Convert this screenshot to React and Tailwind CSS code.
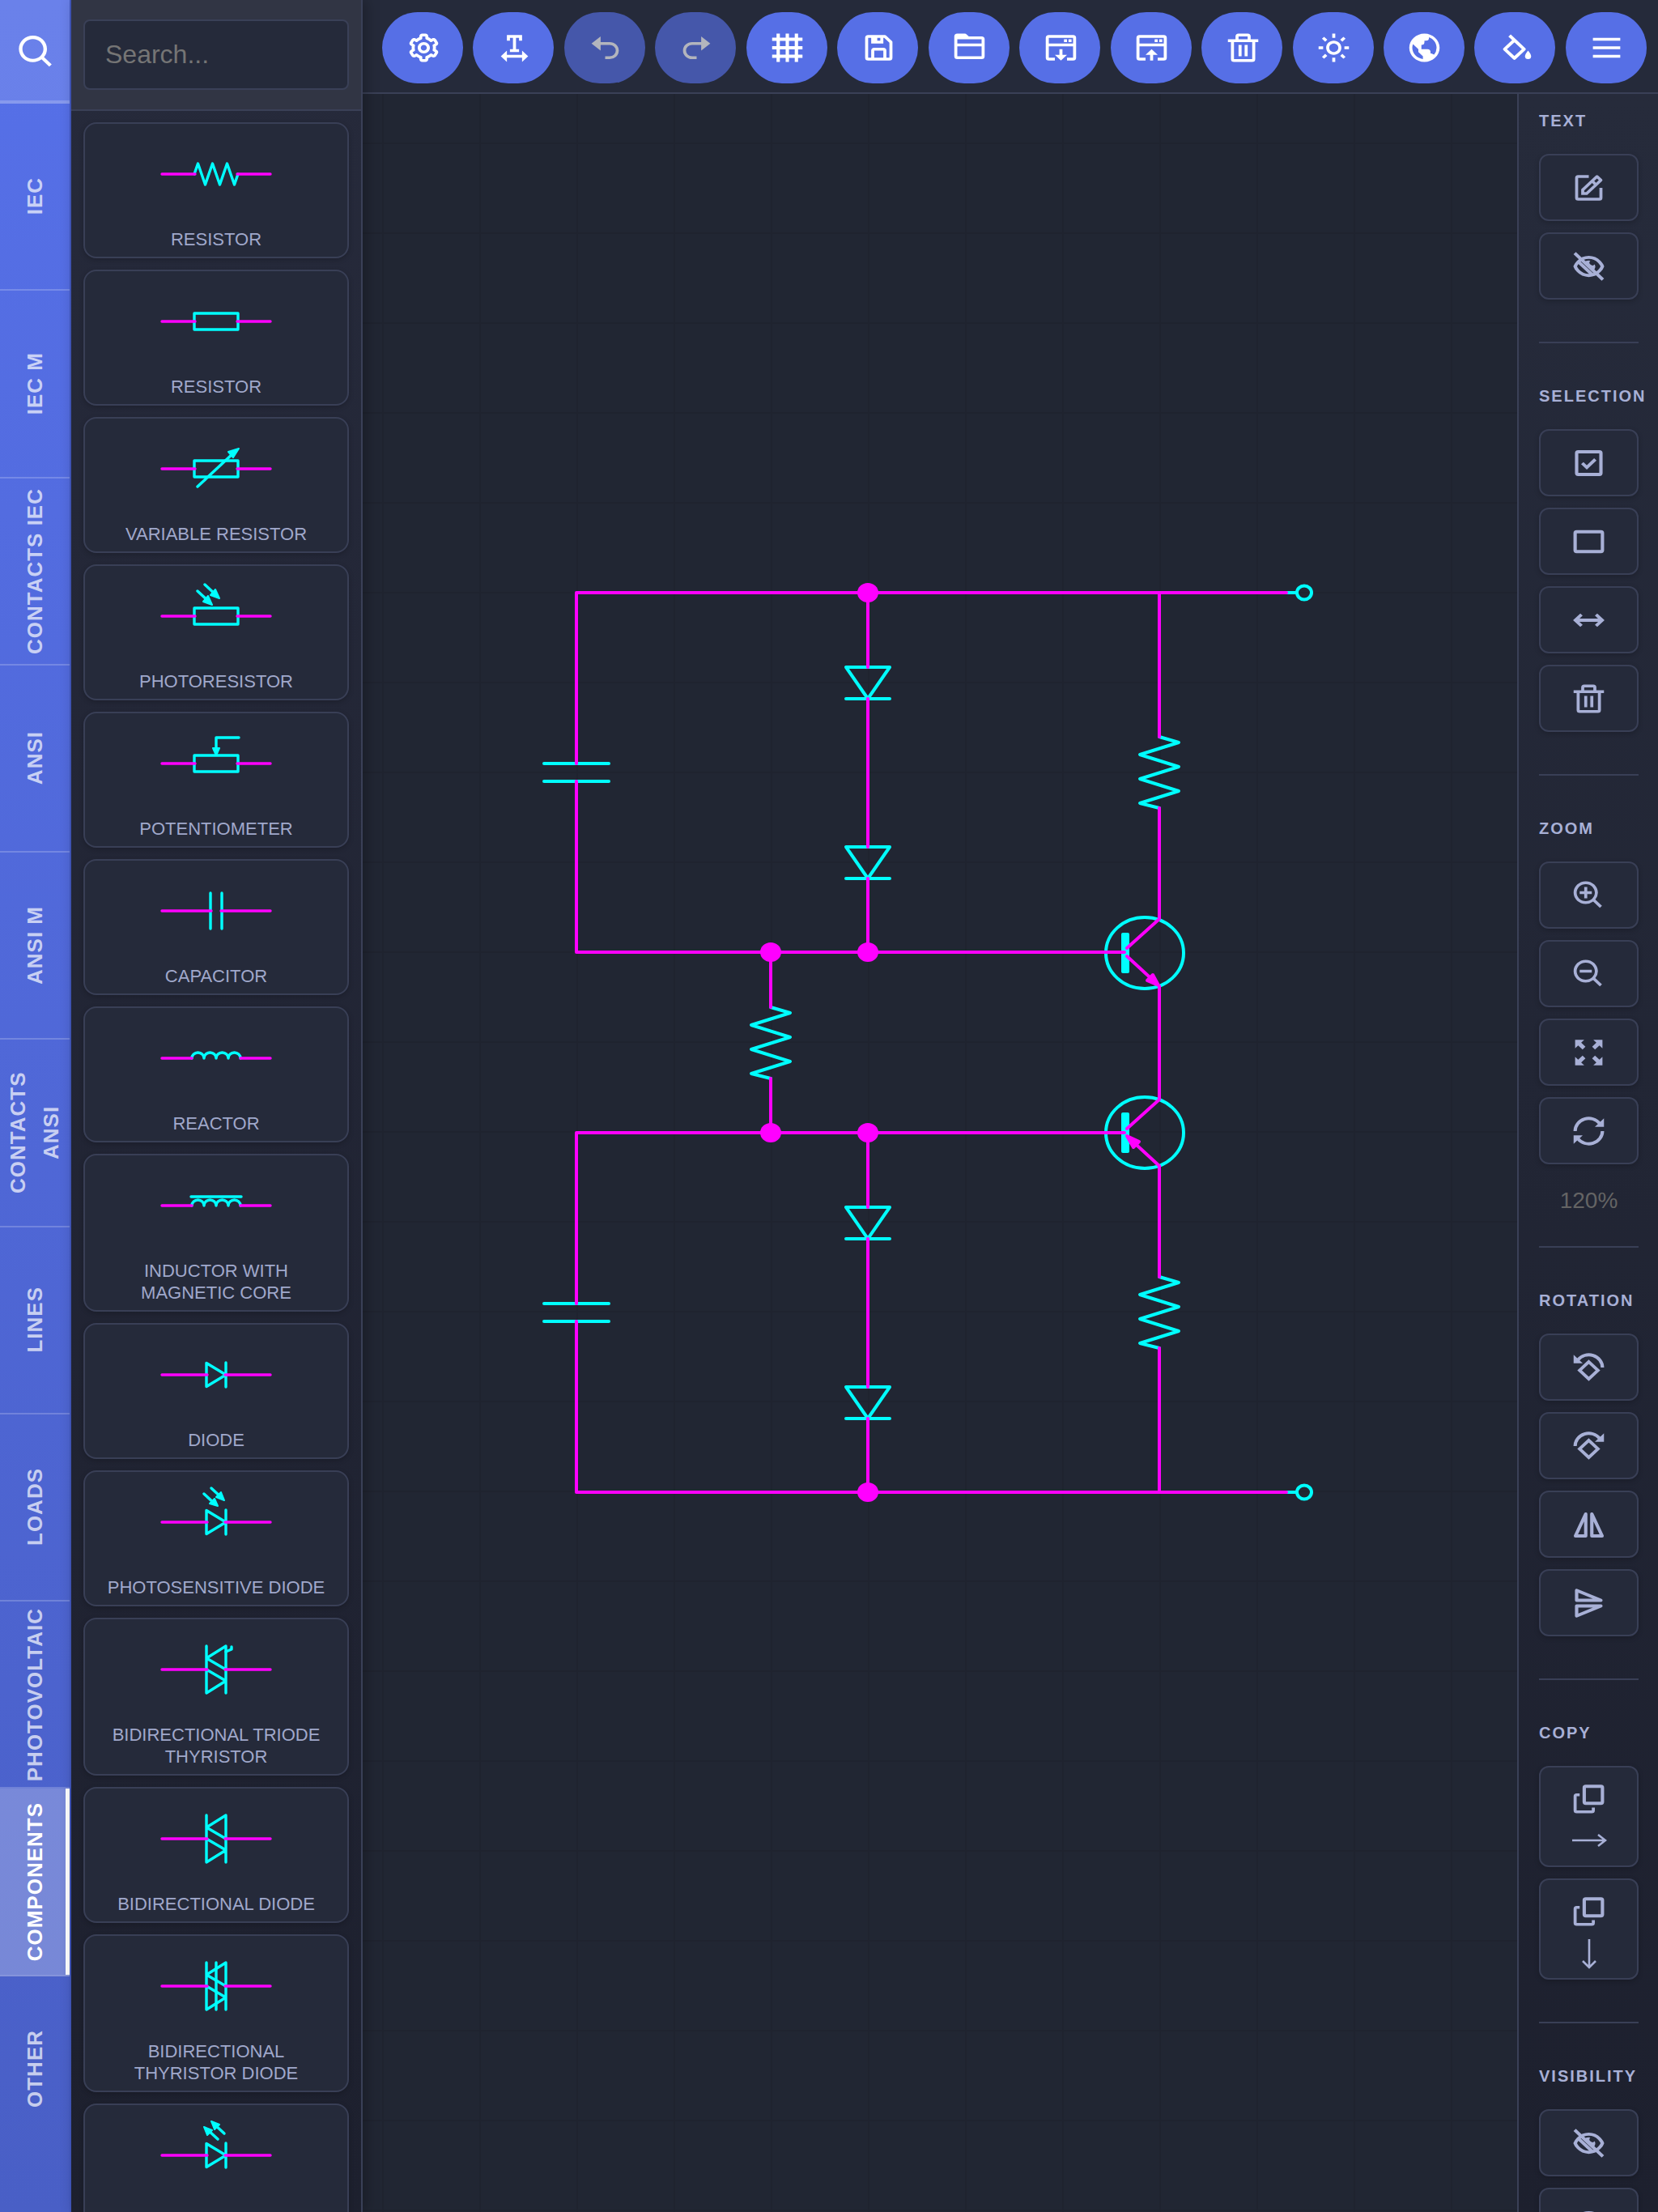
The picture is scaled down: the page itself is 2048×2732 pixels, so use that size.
import React, { useState } from 'react';
import { BiCog, BiSave, BiSearch, BiSun, BiWorld, BiZoomIn, BiZoomOut } from 'react-icons/bi';

// --- Icons (24x24 grid) ---
const Icon = ({ children }) => (
  <svg viewBox="0 0 24 24" preserveAspectRatio="none" fill="currentColor" className="w-[45px] h-[42px]">
    {children}
  </svg>
);

const Stroke = ({ d, ...rest }) => (
  <path d={d} fill="none" stroke="currentColor" strokeWidth="2.2" {...rest} />
);

const lib = (Glyph) => <Glyph preserveAspectRatio="none" className="w-[45px] h-[42px]" />;

const icons = {
  cog: lib(BiCog),
  save: lib(BiSave),
  sun: lib(BiSun),
  world: lib(BiWorld),
  zoomIn: lib(BiZoomIn),
  zoomOut: lib(BiZoomOut),
  hide: (
    <Icon>
      <Stroke d="M3 12s2.3-6.4 9-6.4 9 6.4 9 6.4-2.3 6.4-9 6.4S3 12 3 12z" strokeLinejoin="round" />
      <Stroke d="M2.7 2.7l18.6 18.6M5.2 8.8l9 9" />
      <path d="M9 9a4 4 0 0 1 4-1 1.6 1.6 0 0 0 2.9 2.6A4 4 0 0 1 15 15z" />
    </Icon>
  ),
  show: (
    <Icon>
      <Stroke d="M3 12s2.3-6.4 9-6.4 9 6.4 9 6.4-2.3 6.4-9 6.4S3 12 3 12z" strokeLinejoin="round" />
      <circle cx="12" cy="12" r="3.5" />
    </Icon>
  ),
  textWidth: (
    <Icon>
      <path d="M7 3h10v4h-2V5h-2v8h2v2H9v-2h2V5H9v2H7z" />
      <path d="m3 18 4-4v3h10v-3l4 4-4 4v-3H7v3z" />
    </Icon>
  ),
  undo: (
    <Icon>
      <path d="M9 10h6a4 4 0 0 1 0 8h-3v2h3a6 6 0 0 0 0-12H9V4L3 9l6 5z" />
    </Icon>
  ),
  redo: (
    <Icon>
      <path d="M15 10H9a4 4 0 0 0 0 8h3v2H9A6 6 0 0 1 9 8h6V4l6 5-6 5z" />
    </Icon>
  ),
  grid: (
    <Icon>
      <Stroke d="M6 2v20M12 2v20M18 2v20M2 6h20M2 12h20M2 18h20" />
    </Icon>
  ),
  folder: (
    <Icon>
      <path d="M20 4h-8.4l-1.5-1.5A1.5 1.5 0 0 0 9 2H4a2 2 0 0 0-2 2v14a2 2 0 0 0 2 2h16a2 2 0 0 0 2-2V6a2 2 0 0 0-2-2zM4 6h16v3H4zm0 12v-7h16v7z" />
    </Icon>
  ),
  download: (
    <Icon>
      <path d="M20 3H4a2 2 0 0 0-2 2v14a2 2 0 0 0 2 2h4v-2H4v-8h16v8h-4v2h4a2 2 0 0 0 2-2V5a2 2 0 0 0-2-2zM4 9V5h16v4z" />
      <path d="M14 6h2v2h-2zM17 6h2v2h-2zM11 13h2v4h3l-4 4-4-4h3z" />
    </Icon>
  ),
  upload: (
    <Icon>
      <path d="M20 3H4a2 2 0 0 0-2 2v14a2 2 0 0 0 2 2h4v-2H4v-8h16v8h-4v2h4a2 2 0 0 0 2-2V5a2 2 0 0 0-2-2zM4 9V5h16v4z" />
      <path d="M14 6h2v2h-2zM17 6h2v2h-2zM12 13l4 4h-3v4h-2v-4H8z" />
    </Icon>
  ),
  trash: (
    <Icon>
      <path d="M17 6V4a2 2 0 0 0-2-2H9a2 2 0 0 0-2 2v2H2v2h2v12a2 2 0 0 0 2 2h12a2 2 0 0 0 2-2V8h2V6zM9 4h6v2H9zm9 16H6V8h12z" />
      <path d="M9 10h2v8H9zM13 10h2v8h-2z" />
    </Icon>
  ),
  fill: (
    <Icon>
      <Stroke d="M7.8 3.4 17.4 13 11 19.4 4.6 13 11 6.6" strokeLinejoin="round" />
      <path d="M20 14s-2 2.4-2 4a2 2 0 0 0 4 0c0-1.6-2-4-2-4z" />
    </Icon>
  ),
  menu: (
    <Icon>
      <path d="M3 5h18v2H3zM3 11h18v2H3zM3 17h18v2H3z" />
    </Icon>
  ),
  edit: (
    <Icon>
      <path d="M19 19H5V5h7V3H5a2 2 0 0 0-2 2v14a2 2 0 0 0 2 2h14a2 2 0 0 0 2-2v-7h-2z" />
      <path fillRule="evenodd" d="M7 13v4h4l9.7-9.7a1 1 0 0 0 0-1.4l-2.6-2.6a1 1 0 0 0-1.4 0zm2 .8 5.2-5.2 1.2 1.2-5.2 5.2H9zm6.6-6.6 1.8-1.8 1.2 1.2-1.8 1.8z" />
    </Icon>
  ),
  checkbox: (
    <Icon>
      <Stroke d="M5 4h14a1 1 0 0 1 1 1v14a1 1 0 0 1-1 1H5a1 1 0 0 1-1-1V5a1 1 0 0 1 1-1zM7.7 12l3 3 5.6-5.6" />
    </Icon>
  ),
  rectangle: (
    <Icon>
      <Stroke d="M4 5h16a1 1 0 0 1 1 1v12a1 1 0 0 1-1 1H4a1 1 0 0 1-1-1V6a1 1 0 0 1 1-1z" />
    </Icon>
  ),
  moveX: (
    <Icon>
      <Stroke d="M3.5 12h17M7.2 8l-4 4 4 4M16.8 8l4 4-4 4" />
    </Icon>
  ),
  expand: (
    <Icon>
      <path d="M9 3H3v6l2-2L7.9 9.8 9.8 7.9 7 5z" />
      <path d="M15 3h6v6l-2-2-2.9 2.8-1.9-1.9L17 5z" />
      <path d="M9 21H3v-6l2 2 2.9-2.8 1.9 1.9L7 19z" />
      <path d="M15 21h6v-6l-2 2-2.9-2.8-1.9 1.9L17 19z" />
    </Icon>
  ),
  refresh: (
    <Icon>
      <Stroke d="M3 12a9 9 0 0 1 16.2-5.4M21 12a9 9 0 0 1-16.2 5.4" />
      <path d="M22 3v6h-6zM2 21v-6h6z" />
    </Icon>
  ),
  rotateLeft: (
    <Icon>
      <Stroke d="M4.8 6.6A9 9 0 0 1 21 12M12 8l6 6-6 6-6-6z" />
      <path d="M2 3v6h6z" />
    </Icon>
  ),
  rotateRight: (
    <Icon>
      <Stroke d="M19.2 6.6A9 9 0 0 0 3 12M12 8l6 6-6 6-6-6z" />
      <path d="M22 3v6h-6z" />
    </Icon>
  ),
  flipX: (
    <Icon>
      <Stroke d="M10 4.5V20H3.2zM14 4.5V20h6.8z" strokeLinejoin="round" />
    </Icon>
  ),
  flipY: (
    <Icon>
      <Stroke d="M4 3v7h16zM4 21v-7h16z" strokeLinejoin="round" />
    </Icon>
  ),
  copy: (
    <Icon>
      <Stroke d="M10 3h10a1 1 0 0 1 1 1v10a1 1 0 0 1-1 1H10a1 1 0 0 1-1-1V4a1 1 0 0 1 1-1z" />
      <path d="M6 8H4a2 2 0 0 0-2 2v10a2 2 0 0 0 2 2h10a2 2 0 0 0 2-2v-2h-2v2H4V10h2z" />
    </Icon>
  ),
};

// Thin arrows under the copy icons
const arrows = {
  right: 'M1 20H42M33 13L42 20L33 27',
  down: 'M22 3V38M14 30L22 38L30 30',
};

// --- Component symbols, drawn around (0, 0) ---
const Leads = ({ at }) => <path d={`M-67 0H${-at}M${at} 0H67`} stroke="#f0f" />;

const Arrow = ({ d, head }) => (
  <>
    <path d={d} />
    <path d={head} fill="#0ff" strokeWidth="2" />
  </>
);

const body = 'M-27-10H27V10H-27z';
const coil = 'M-30 0a7.5 7 0 0 1 15 0a7.5 7 0 0 1 15 0a7.5 7 0 0 1 15 0a7.5 7 0 0 1 15 0';
const diode = 'M-12-14.5V14.5L12 0zM12-15V15';
const diac = 'M-12-29V29L12 14L-12 0M12 29V-29L-12-14L12 0';

const symbols = {
  zigzag: <><path d="M-27 0l4.5-13 9 26 9-26 9 26 9-26 9 26 4.5-13" /><Leads at={26} /></>,
  resistor: <><path d={body} /><Leads at={26} /></>,
  variable: (
    <>
      <path d={body} />
      <Arrow d="M-23 22L22-20" head="M28-25L15-21L21-14z" />
      <Leads at={26} />
    </>
  ),
  photoresistor: (
    <>
      <path d={body} />
      <Arrow d="M-23-31L-9-18" head="M-5-14L-16-18L-10-25z" />
      <Arrow d="M-14-39L0-26" head="M4-22L-7-26L-1-33z" />
      <Leads at={26} />
    </>
  ),
  potentiometer: (
    <>
      <path d={body} />
      <Arrow d="M28-32H0V-16" head="M0-10L-4-19H4z" />
      <Leads at={26} />
    </>
  ),
  capacitor: <><path d="M-7-22V22M7-22V22" /><Leads at={6} /></>,
  reactor: <><path d={coil} /><Leads at={30} /></>,
  inductor: <><path d={coil} /><path d="M-31-11H31" /><Leads at={30} /></>,
  diode: <><path d={diode} /><Leads at={11} /></>,
  photodiode: (
    <>
      <path d={diode} />
      <Arrow d="M-15-35L-1-22" head="M2-20L-8-23L-2-29z" />
      <Arrow d="M-6-42L7-30" head="M10-27L0-31L6-37z" />
      <Leads at={11} />
    </>
  ),
  triac: <><path d={diac} /><path d="M12-22L19-25V-28" /><Leads at={11} /></>,
  diac: <><path d={diac} /><Leads at={11} /></>,
  thyristorDiode: <><path d={diac} /><path d="M0-29V29" /><Leads at={11} /></>,
  led: (
    <>
      <path d={diode} />
      <Arrow d="M2-20L-11-32" head="M-15-35L-5-31L-11-25z" />
      <Arrow d="M10-27L-3-39" head="M-6-42L4-38L-2-32z" />
      <Leads at={11} />
    </>
  ),
};

// --- Data ---
const categories = [
  'IEC', 'IEC M', 'CONTACTS IEC', 'ANSI', 'ANSI M', 'CONTACTS ANSI',
  'LINES', 'LOADS', 'PHOTOVOLTAIC', 'COMPONENTS', 'OTHER',
];

const parts = [
  { id: 1, name: 'RESISTOR', symbol: 'zigzag' },
  { id: 2, name: 'RESISTOR', symbol: 'resistor' },
  { id: 3, name: 'VARIABLE RESISTOR', symbol: 'variable' },
  { id: 4, name: 'PHOTORESISTOR', symbol: 'photoresistor' },
  { id: 5, name: 'POTENTIOMETER', symbol: 'potentiometer' },
  { id: 6, name: 'CAPACITOR', symbol: 'capacitor' },
  { id: 7, name: 'REACTOR', symbol: 'reactor' },
  { id: 8, name: 'INDUCTOR WITH MAGNETIC CORE', symbol: 'inductor' },
  { id: 9, name: 'DIODE', symbol: 'diode' },
  { id: 10, name: 'PHOTOSENSITIVE DIODE', symbol: 'photodiode' },
  { id: 11, name: 'BIDIRECTIONAL TRIODE THYRISTOR', symbol: 'triac' },
  { id: 12, name: 'BIDIRECTIONAL DIODE', symbol: 'diac' },
  { id: 13, name: 'BIDIRECTIONAL THYRISTOR DIODE', symbol: 'thyristorDiode' },
  { id: 14, name: 'LED', symbol: 'led' },
];

const toolbar = [
  { icon: 'cog', label: 'Settings' },
  { icon: 'textWidth', label: 'Text width' },
  { icon: 'undo', label: 'Undo', disabled: true },
  { icon: 'redo', label: 'Redo', disabled: true },
  { icon: 'grid', label: 'Grid' },
  { icon: 'save', label: 'Save' },
  { icon: 'folder', label: 'Open' },
  { icon: 'download', label: 'Export' },
  { icon: 'upload', label: 'Import' },
  { icon: 'trash', label: 'Clear' },
  { icon: 'sun', label: 'Theme' },
  { icon: 'world', label: 'Language' },
  { icon: 'fill', label: 'Fill' },
  { icon: 'menu', label: 'Menu' },
];

const sections = [
  { title: 'TEXT', tools: [{ icon: 'edit', label: 'Edit text' }, { icon: 'hide', label: 'Hide text' }] },
  {
    title: 'SELECTION',
    tools: [
      { icon: 'checkbox', label: 'Select all' },
      { icon: 'rectangle', label: 'Select area' },
      { icon: 'moveX', label: 'Move' },
      { icon: 'trash', label: 'Delete' },
    ],
  },
  {
    title: 'ZOOM',
    tools: [
      { icon: 'zoomIn', label: 'Zoom in' },
      { icon: 'zoomOut', label: 'Zoom out' },
      { icon: 'expand', label: 'Fit' },
      { icon: 'refresh', label: 'Reset zoom' },
    ],
    value: '120%',
  },
  {
    title: 'ROTATION',
    tools: [
      { icon: 'rotateLeft', label: 'Rotate left' },
      { icon: 'rotateRight', label: 'Rotate right' },
      { icon: 'flipX', label: 'Flip horizontally' },
      { icon: 'flipY', label: 'Flip vertically' },
    ],
  },
  {
    title: 'COPY',
    tools: [
      { icon: 'copy', label: 'Copy right', arrow: 'right' },
      { icon: 'copy', label: 'Copy down', arrow: 'down' },
    ],
  },
  { title: 'VISIBILITY', tools: [{ icon: 'hide', label: 'Hide' }, { icon: 'show', label: 'Show' }] },
];

// --- Category tabs ---
const CategoryTabs = ({ active, onSelect }) => (
  <nav className="w-[88px] shrink-0 flex flex-col pb-[60px] border-r-2 border-[#4359c0] bg-linear-to-b from-[#5670e8] to-[#495fc6]">
    <button type="button" aria-label="Search" className="h-[128px] shrink-0 flex items-center justify-center pt-1 pl-1 text-white bg-white/12 border-b-4 border-white/20">
      <BiSearch preserveAspectRatio="none" className="w-[52px] h-[49px]" />
    </button>
    {categories.map((name) => (
      <button
        key={name}
        type="button"
        onClick={() => onSelect(name)}
        className={`flex-1 min-h-0 flex items-center justify-center border-b-2 last:border-transparent text-[26px] leading-[41px] font-bold tracking-[1px]
          ${name === active
            ? 'bg-white/25 text-white border-white/10 shadow-[inset_-5px_0_0_#fff]'
            : 'text-white/70 border-white/20'}`}
      >
        <span className="[writing-mode:vertical-rl] rotate-180 max-h-[220px] text-center">{name}</span>
      </button>
    ))}
  </nav>
);

// --- Parts palette ---
const Palette = () => {
  const [query, setQuery] = useState('');
  const visible = parts.filter((part) => part.name.includes(query.toUpperCase()));

  return (
    <aside className="relative z-10 w-[360px] shrink-0 flex flex-col border-r-2 border-[#3a4057] bg-linear-to-b from-[#262a3b] to-[#1d202e] shadow-[4px_0_16px_rgba(0,0,0,0.25)]">
      <div className="px-[15px] py-6 border-b-2 border-[#3a4057] bg-[#313544]">
        <input
          type="text"
          aria-label="Search components"
          placeholder="Search..."
          value={query}
          onChange={(e) => setQuery(e.target.value)}
          className="w-full h-[87px] px-[25px] rounded-lg border-2 border-[#3a4057] bg-[#252a3a] text-[32px] text-[#a8b0d6] placeholder:text-[#757575] outline-none"
        />
      </div>
      <div className="flex-1 min-h-0 overflow-hidden flex flex-col gap-[14px] px-[15px] pt-[14px]">
        {visible.map((part) => (
          <button
            key={part.id}
            type="button"
            className="shrink-0 flex flex-col items-center pt-[14px] pb-2 px-4 rounded-2xl border-2 border-[#393f56] bg-[#252a3a] shadow-[0_2px_6px_rgba(0,0,0,0.2)] text-[22px] leading-[27px] text-[#a0a8cb]"
          >
            <svg viewBox="-70 -48 140 96" fill="none" stroke="#0ff" strokeWidth="3.4" strokeLinecap="round" strokeLinejoin="round" className="w-[140px] h-24 mb-[19px]">
              {symbols[part.symbol]}
            </svg>
            {part.name}
          </button>
        ))}
      </div>
    </aside>
  );
};

// --- Schematic ---
const Diode = ({ x, y }) => (
  <path d={`M${x - 27} ${y}h54l-27 39zM${x - 27} ${y + 39}h54`} />
);

const Resistor = ({ x, y }) => (
  <path d={`M${x} ${y}l24 7-48 15 48 15-48 15 48 15-48 15 24 6`} />
);

const Capacitor = ({ x, y }) => <path d={`M${x - 40} ${y}h80M${x - 40} ${y + 22}h80`} />;

const Terminal = ({ x, y }) => (
  <>
    <path d={`M${x - 23} ${y}h12`} />
    <ellipse cx={x} cy={y} rx="9" ry="8.5" />
  </>
);

const Transistor = ({ x, y }) => (
  <>
    <ellipse cx={x} cy={y} rx="48" ry="44" />
    <rect x={x - 29} y={y - 25} width="10" height="50" rx="2" fill="#0ff" stroke="none" />
  </>
);

const junctions = [[360, 0], [240, 444], [360, 444], [240, 667], [360, 667], [360, 1111]];

const Canvas = () => (
  <main className="relative flex-1 min-w-0 overflow-hidden bg-[#212633]">
    <svg className="absolute inset-0 w-full h-full">
      <defs>
        <pattern id="grid" x="24" y="60" width="120" height="111" patternUnits="userSpaceOnUse">
          <path d="M0 0V111M0 0H120" stroke="#1f232f" strokeWidth="4" />
        </pattern>
      </defs>
      <rect width="100%" height="100%" fill="url(#grid)" />
      <g transform="translate(264 616)" fill="none" strokeWidth="4" strokeLinecap="round" strokeLinejoin="round">
        <g stroke="#0ff">
          {[0, 667].map((y) => (
            <g key={y}>
              <Capacitor x={0} y={y + 211} />
              <Diode x={360} y={y + 92} />
              <Diode x={360} y={y + 314} />
              <Resistor x={720} y={y + 178} />
            </g>
          ))}
          <Resistor x={240} y={512} />
          <Transistor x={702} y={445} />
          <Transistor x={702} y={667} />
          <Terminal x={899} y={0} />
          <Terminal x={899} y={1111} />
        </g>
        <g stroke="#f0f">
          <path d="M0 211V0H877M0 233V444H677M0 878V667H677M0 900V1111H877" />
          <path d="M360 0V92M360 131V314M360 353V444M360 667V759M360 798V981M360 1020V1111" />
          <path d="M240 444V512M240 600V667" />
          <path d="M720 0V178M720 266V403L680 439M680 449L718 484M720 486V626L680 662M720 708V845M720 933V1111M720 708L682 673" />
          <path d="M719 485L705 479L712 472z" fill="#f0f" />
          <path d="M680 671L695 678L688 685z" fill="#f0f" />
        </g>
        {junctions.map(([x, y]) => (
          <ellipse key={`${x}-${y}`} cx={x} cy={y} rx="13" ry="12" fill="#f0f" />
        ))}
      </g>
    </svg>
  </main>
);

// --- Right tool panel ---
const ToolPanel = () => (
  <aside className="w-[174px] shrink-0 overflow-hidden pl-[25px] pr-6 border-l-2 border-[#3a4057] bg-linear-to-b from-[#262b3b] to-[#1d202e]">
    {sections.map((section) => (
      <section key={section.title} className="pt-[52px] first:pt-5 pb-[52px] border-b-2 last:border-b-0 border-[#393f56]">
        <h2 className="mb-7 text-[20px] leading-[26px] font-bold tracking-[2px] whitespace-nowrap text-[#a8b0d6]">{section.title}</h2>
        <div className="flex flex-col gap-[14px]">
          {section.tools.map((tool) => (
            <button
              key={tool.label}
              type="button"
              aria-label={tool.label}
              className={`flex flex-col items-center justify-center rounded-xl border-2 border-[#393f56] bg-[#252a3a] shadow-[0_2px_6px_rgba(0,0,0,0.2)] text-[#a8b0d6] ${tool.arrow ? 'h-[125px] pt-[6px] gap-[10px]' : 'h-[83px]'}`}
            >
              {icons[tool.icon]}
              {tool.arrow && (
                <svg viewBox="0 0 44 40" className="w-11 h-10">
                  <Stroke d={arrows[tool.arrow]} strokeWidth="2.6" />
                </svg>
              )}
            </button>
          ))}
        </div>
        {section.value && (
          <p className="mt-8 -mb-2 text-center text-[28px] leading-[25px] text-[#646464]">{section.value}</p>
        )}
      </section>
    ))}
  </aside>
);

const App = () => {
  const [category, setCategory] = useState('COMPONENTS');

  return (
    <div className="h-screen flex overflow-hidden bg-[#212633] font-['Liberation_Sans',Arial,sans-serif]">
      <CategoryTabs active={category} onSelect={setCategory} />
      <Palette />
      <div className="flex-1 min-w-0 flex flex-col">
        <header className="h-[116px] shrink-0 flex items-center justify-between pt-[3px] pl-6 pr-[14px] border-b-2 border-[#3a4057] bg-[#252a3a]">
          {toolbar.map((item) => (
            <button
              key={item.label}
              type="button"
              aria-label={item.label}
              disabled={item.disabled}
              className={`w-[100px] h-[88px] pl-[2px] flex items-center justify-center rounded-full
                ${item.disabled ? 'bg-[#4557aa] text-[#b3b5bd]' : 'bg-[#566fe6] text-white'}`}
            >
              {icons[item.icon]}
            </button>
          ))}
        </header>
        <div className="flex-1 min-h-0 flex">
          <Canvas />
          <ToolPanel />
        </div>
      </div>
    </div>
  );
};

export default App;
